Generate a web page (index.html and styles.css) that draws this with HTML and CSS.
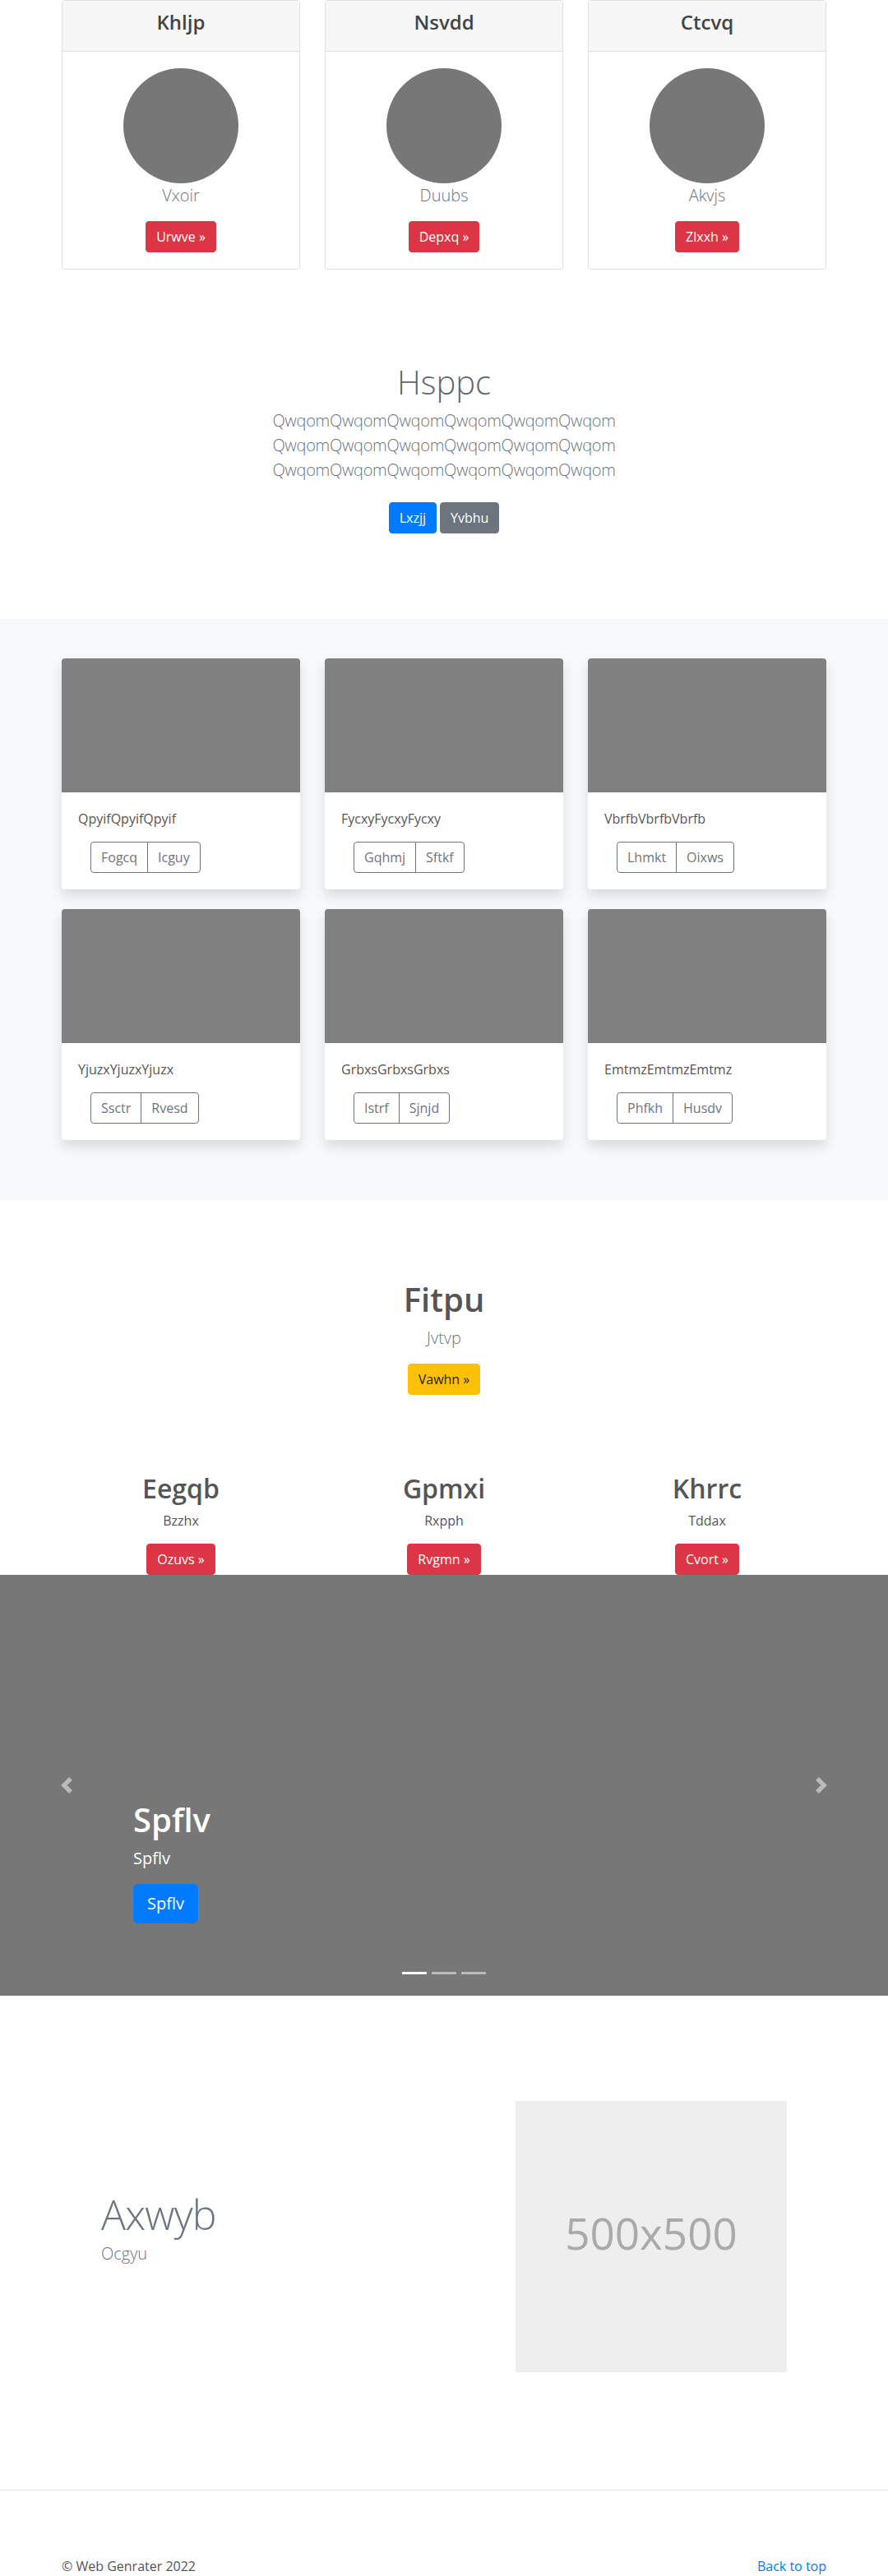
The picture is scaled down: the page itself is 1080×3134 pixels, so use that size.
FILE: index.html
```html
<!DOCTYPE html>
<html lang="en">
<head>
<meta charset="utf-8">
<title>Page</title>
<link rel="stylesheet" href="styles.css">
</head>
<body>
<div class="container">
  <div class="pricing">
    <div class="pcard">
      <div class="pcard-head"><h4>Khljp</h4></div>
      <div class="pcard-body">
        <div class="avatar"></div>
        <p class="lead muted">Vxoir</p>
        <a class="btn btn-danger" href="#">Urwve &raquo;</a>
      </div>
    </div>
    <div class="pcard">
      <div class="pcard-head"><h4>Nsvdd</h4></div>
      <div class="pcard-body">
        <div class="avatar"></div>
        <p class="lead muted">Duubs</p>
        <a class="btn btn-danger" href="#">Depxq &raquo;</a>
      </div>
    </div>
    <div class="pcard">
      <div class="pcard-head"><h4>Ctcvq</h4></div>
      <div class="pcard-body">
        <div class="avatar"></div>
        <p class="lead muted">Akvjs</p>
        <a class="btn btn-danger" href="#">Zlxxh &raquo;</a>
      </div>
    </div>
  </div>
</div>

<section class="jumbo">
  <div class="jumbo-inner">
    <h1>Hsppc</h1>
    <p class="lead muted">QwqomQwqomQwqomQwqomQwqomQwqom QwqomQwqomQwqomQwqomQwqomQwqom QwqomQwqomQwqomQwqomQwqomQwqom</p>
    <div class="actions">
      <a class="btn btn-primary" href="#">Lxzjj</a>
      <a class="btn btn-secondary" href="#">Yvbhu</a>
    </div>
  </div>
</section>

<div class="album">
  <div class="container">
    <div class="album-grid">
      <div class="acard">
        <div class="acard-img"></div>
        <div class="acard-body">
          <p class="acard-text">QpyifQpyifQpyif</p>
          <div class="btn-row"><div class="btn-group"><a class="btn btn-outline" href="#">Fogcq</a><a class="btn btn-outline" href="#">Icguy</a></div></div>
        </div>
      </div>
      <div class="acard">
        <div class="acard-img"></div>
        <div class="acard-body">
          <p class="acard-text">FycxyFycxyFycxy</p>
          <div class="btn-row"><div class="btn-group"><a class="btn btn-outline" href="#">Gqhmj</a><a class="btn btn-outline" href="#">Sftkf</a></div></div>
        </div>
      </div>
      <div class="acard">
        <div class="acard-img"></div>
        <div class="acard-body">
          <p class="acard-text">VbrfbVbrfbVbrfb</p>
          <div class="btn-row"><div class="btn-group"><a class="btn btn-outline" href="#">Lhmkt</a><a class="btn btn-outline" href="#">Oixws</a></div></div>
        </div>
      </div>
      <div class="acard">
        <div class="acard-img"></div>
        <div class="acard-body">
          <p class="acard-text">YjuzxYjuzxYjuzx</p>
          <div class="btn-row"><div class="btn-group"><a class="btn btn-outline" href="#">Ssctr</a><a class="btn btn-outline" href="#">Rvesd</a></div></div>
        </div>
      </div>
      <div class="acard">
        <div class="acard-img"></div>
        <div class="acard-body">
          <p class="acard-text">GrbxsGrbxsGrbxs</p>
          <div class="btn-row"><div class="btn-group"><a class="btn btn-outline" href="#">Istrf</a><a class="btn btn-outline" href="#">Sjnjd</a></div></div>
        </div>
      </div>
      <div class="acard">
        <div class="acard-img"></div>
        <div class="acard-body">
          <p class="acard-text">EmtmzEmtmzEmtmz</p>
          <div class="btn-row"><div class="btn-group"><a class="btn btn-outline" href="#">Phfkh</a><a class="btn btn-outline" href="#">Husdv</a></div></div>
        </div>
      </div>
    </div>
  </div>
</div>

<section class="hero2">
  <h1>Fitpu</h1>
  <p class="lead muted">Jvtvp</p>
  <a class="btn btn-warning" href="#">Vawhn &raquo;</a>
</section>

<div class="container">
  <div class="cols">
    <div class="col">
      <h2>Eegqb</h2>
      <p>Bzzhx</p>
      <a class="btn btn-danger" href="#">Ozuvs &raquo;</a>
    </div>
    <div class="col">
      <h2>Gpmxi</h2>
      <p>Rxpph</p>
      <a class="btn btn-danger" href="#">Rvgmn &raquo;</a>
    </div>
    <div class="col">
      <h2>Khrrc</h2>
      <p>Tddax</p>
      <a class="btn btn-danger" href="#">Cvort &raquo;</a>
    </div>
  </div>
</div>

<div class="carousel">
  <a class="ctrl prev" href="#">
    <svg width="20" height="20" viewBox="0 0 8 8"><path fill="#fff" fill-opacity=".5" d="M5.25 0l-4 4 4 4 1.5-1.5L4.25 4l2.5-2.5L5.25 0z"/></svg>
  </a>
  <a class="ctrl next" href="#">
    <svg width="20" height="20" viewBox="0 0 8 8"><path fill="#fff" fill-opacity=".5" d="M2.75 0l-1.5 1.5L3.75 4l-2.5 2.5L2.75 8l4-4-4-4z"/></svg>
  </a>
  <div class="caption">
    <h1>Spflv</h1>
    <p>Spflv</p>
    <a class="btn btn-primary btn-lg" href="#">Spflv</a>
  </div>
  <div class="indicators">
    <span class="active"></span><span></span><span></span>
  </div>
</div>

<div class="featurette">
  <div class="feat-text">
    <h2>Axwyb</h2>
    <p class="lead muted">Ocgyu</p>
  </div>
  <svg class="ph" width="330" height="330" viewBox="0 0 330 330">
    <rect width="100%" height="100%" fill="#eee"/>
    <text class="ph-text" x="50%" y="50%" dy=".3em" text-anchor="middle" fill="#aaa">500x500</text>
  </svg>
</div>

<hr class="divider">

<footer class="container footer">
  <p>&copy; Web Genrater 2022</p>
  <p><a href="#">Back to top</a></p>
</footer>
</body>
</html>
```

FILE: styles.css
```css
* { box-sizing: border-box; }
body {
  margin: 0;
  font-family: "Segoe UI", "Open Sans", sans-serif;
  font-size: 16px;
  line-height: 1.5;
  color: #555;
  background: #fff;
}
h1, h2, h4, p { margin: 0; }
a { text-decoration: none; }
.container { width: 960px; margin: 0 auto; padding: 0 15px; }

/* buttons */
.btn {
  display: inline-block;
  font-size: 16px;
  line-height: 24px;
  padding: 6px 12px;
  border: 1px solid transparent;
  border-radius: 4px;
  font-weight: 400;
  text-align: center;
  vertical-align: middle;
}
.btn-danger { background: #dc3545; border-color: #dc3545; color: #fff; }
.btn-primary { background: #007bff; border-color: #007bff; color: #fff; }
.btn-secondary { background: #6c757d; border-color: #6c757d; color: #fff; }
.btn-warning { background: #ffc107; border-color: #ffc107; color: #212529; }
.btn-outline { background: transparent; border-color: #6c757d; color: #6c757d; }
.btn-lg { font-size: 20px; line-height: 30px; padding: 8px 16px; border-radius: 6px; }

.lead { font-size: 20px; font-weight: 300; line-height: 1.5; }
.muted { color: #6c757d; }

/* pricing cards */
.pricing { display: grid; grid-template-columns: repeat(3, 1fr); column-gap: 30px; }
.pcard {
  border: 1px solid #dfdfdf;
  border-radius: 4px;
  background: #fff;
  text-align: center;
  overflow: hidden;
}
.pcard-head { background: #f7f7f7; border-bottom: 1px solid #dfdfdf; padding: 12px 20px; }
.pcard-head h4 { font-size: 24px; font-weight: 600; line-height: 1.2; margin-bottom: 8px; color: #444; }
.pcard-body { padding: 20px; }
.avatar { width: 140px; height: 140px; border-radius: 50%; background: #777; margin: 0 auto; }
.pcard-body .lead { margin-bottom: 16px; }

/* jumbotron */
.jumbo { text-align: center; padding: 113px 0 96px; }
.jumbo-inner { width: 470px; margin: 0 auto; }
.jumbo h1 { font-size: 40px; font-weight: 300; line-height: 1.2; margin-bottom: 8px; color: #5f6770; }
.jumbo .lead { margin-bottom: 16px; letter-spacing: -0.3px; }
.actions { display: flex; justify-content: center; gap: 4px; padding: 8px 0; }

/* album */
.album { background: #f8f9fa; padding: 48px 0 73px; }
.album-grid { display: grid; grid-template-columns: repeat(3, 1fr); column-gap: 30px; row-gap: 24px; }
.acard { background: #fff; border-radius: 4px; box-shadow: 0 8px 16px rgba(0, 0, 0, 0.13); overflow: hidden; }
.acard-img { height: 163px; background: #808080; }
.acard-body { padding: 20px; }
.acard-text { line-height: 24px; margin-bottom: 16px; }
.btn-row { display: flex; }
.btn-group { display: flex; margin-left: 15px; }
.btn-group .btn:first-child { border-radius: 4px 0 0 4px; }
.btn-group .btn:last-child { border-radius: 0 4px 4px 0; margin-left: -1px; }

/* hero 2 */
.hero2 { text-align: center; padding-top: 97px; }
.hero2 h1 { font-size: 40px; font-weight: 600; line-height: 1.2; margin-bottom: 8px; }
.hero2 .lead { margin-bottom: 16px; }

/* columns */
.cols { display: grid; grid-template-columns: repeat(3, 1fr); column-gap: 30px; text-align: center; padding-top: 95px; }
.cols h2 { font-size: 32px; font-weight: 600; line-height: 1.2; margin-bottom: 8px; }
.cols p { margin-bottom: 16px; }
.cols .btn { display: block; width: max-content; margin: 0 auto; }

/* carousel */
.carousel { position: relative; height: 512px; background: #777; }
.ctrl { position: absolute; top: 0; bottom: 0; width: 15%; display: flex; align-items: center; justify-content: center; }
.ctrl.prev { left: 0; }
.ctrl.next { right: 0; }
.ctrl svg { display: block; }
.caption { position: absolute; left: 15%; right: 15%; bottom: 88px; color: #fff; text-align: left; }
.caption h1 { font-size: 40px; font-weight: 600; line-height: 1.2; margin-bottom: 8px; }
.caption p { font-size: 20px; line-height: 30px; margin-bottom: 16px; }
.caption .btn { display: block; width: max-content; }
.indicators { position: absolute; left: 15%; right: 15%; bottom: 26px; display: flex; justify-content: center; gap: 6px; }
.indicators span { width: 30px; height: 3px; background: #fff; opacity: 0.5; }
.indicators span.active { opacity: 1; }

/* featurette */
.featurette {
  width: 834px;
  margin: 128px auto 0;
  display: grid;
  grid-template-columns: 474px 330px;
  column-gap: 30px;
  align-items: center;
}
.featurette h2 { font-size: 50px; font-weight: 300; line-height: 1; letter-spacing: -0.8px; margin-bottom: 8px; color: #6c757d; }
.featurette .lead { margin-bottom: 16px; }
.ph { display: block; width: 330px; height: 330px; }
.ph-text { font-family: "Segoe UI", "Open Sans", sans-serif; font-size: 53px; }

/* footer */
.divider { border: 0; border-top: 1px solid #e5e5e5; margin: 143px 0 0; height: 0; }
.footer { display: flex; justify-content: space-between; padding-top: 80px; }
.footer p { line-height: 24px; }
.footer a { color: #007bff; }
```
